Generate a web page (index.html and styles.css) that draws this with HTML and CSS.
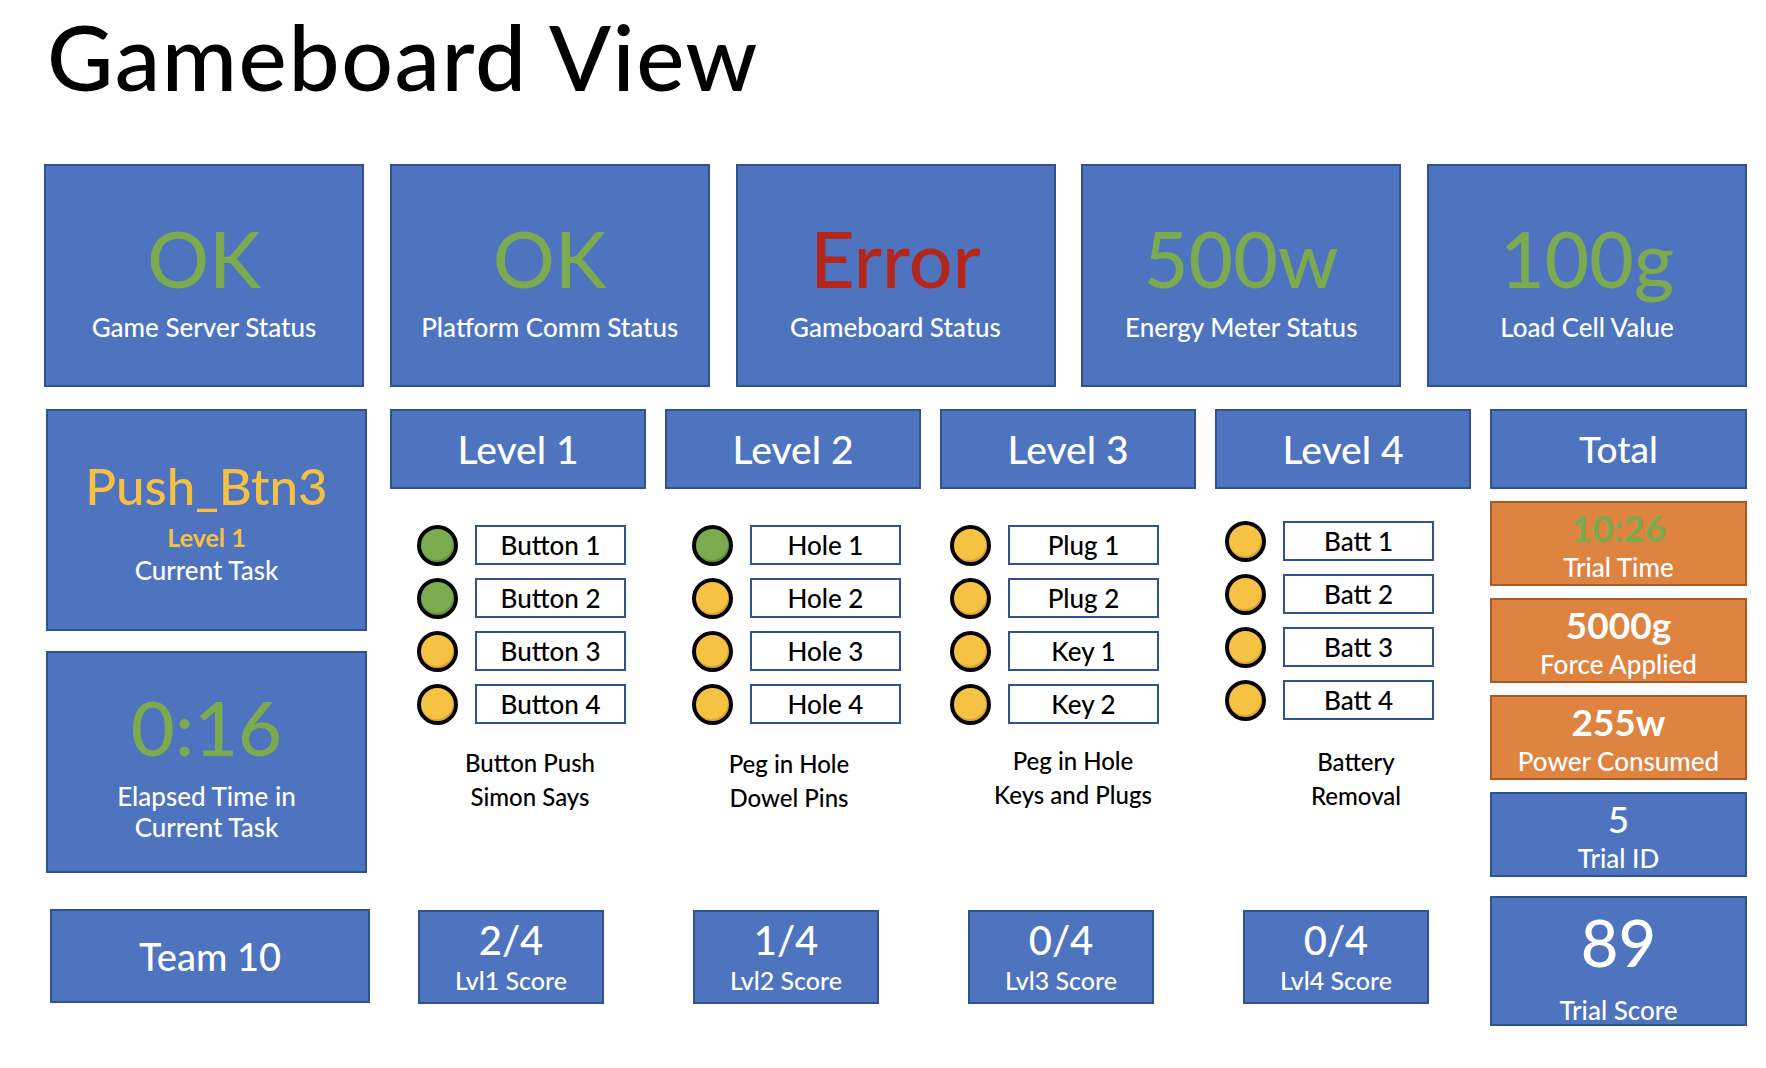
FILE: index.html
```html
<!DOCTYPE html>
<html lang="en">
<head>
<meta charset="utf-8">
<title>Gameboard View</title>
<link rel="stylesheet" href="styles.css">
</head>
<body>
<div class="page">
  <header class="title-bar"><h1 class="title">Gameboard View</h1></header>

  <section class="status-row">
    <div class="box status"><div class="status-val green">OK</div><div class="status-lab">Game Server Status</div></div>
    <div class="box status"><div class="status-val green">OK</div><div class="status-lab">Platform Comm Status</div></div>
    <div class="box status"><div class="status-val red">Error</div><div class="status-lab">Gameboard Status</div></div>
    <div class="box status"><div class="status-val green">500w</div><div class="status-lab">Energy Meter Status</div></div>
    <div class="box status"><div class="status-val green">100g</div><div class="status-lab">Load Cell Value</div></div>
  </section>

  <section class="main">
    <div class="left-col">
      <div class="box task">
        <div class="task-val">Push_Btn3</div>
        <div class="task-level">Level 1</div>
        <div class="task-lab">Current Task</div>
      </div>
      <div class="box elapsed">
        <div class="elapsed-val">0:16</div>
        <div class="elapsed-lab">Elapsed Time in</div>
        <div class="elapsed-lab">Current Task</div>
      </div>
      <div class="box team">Team 10</div>
    </div>

    <div class="level-col">
      <div class="box level-head">Level 1</div>
      <ul class="items">
        <li class="item"><span class="dot dot-green"></span><span class="item-lab">Button 1</span></li>
        <li class="item"><span class="dot dot-green"></span><span class="item-lab">Button 2</span></li>
        <li class="item"><span class="dot dot-yellow"></span><span class="item-lab">Button 3</span></li>
        <li class="item"><span class="dot dot-yellow"></span><span class="item-lab">Button 4</span></li>
      </ul>
      <div class="caption cap-1">Button Push<br>Simon Says</div>
      <div class="box score"><div class="score-val">2/4</div><div class="score-lab">Lvl1 Score</div></div>
    </div>

    <div class="level-col">
      <div class="box level-head">Level 2</div>
      <ul class="items">
        <li class="item"><span class="dot dot-green"></span><span class="item-lab">Hole 1</span></li>
        <li class="item"><span class="dot dot-yellow"></span><span class="item-lab">Hole 2</span></li>
        <li class="item"><span class="dot dot-yellow"></span><span class="item-lab">Hole 3</span></li>
        <li class="item"><span class="dot dot-yellow"></span><span class="item-lab">Hole 4</span></li>
      </ul>
      <div class="caption cap-2">Peg in Hole<br>Dowel Pins</div>
      <div class="box score"><div class="score-val">1/4</div><div class="score-lab">Lvl2 Score</div></div>
    </div>

    <div class="level-col">
      <div class="box level-head">Level 3</div>
      <ul class="items items-narrow">
        <li class="item"><span class="dot dot-yellow"></span><span class="item-lab">Plug 1</span></li>
        <li class="item"><span class="dot dot-yellow"></span><span class="item-lab">Plug 2</span></li>
        <li class="item"><span class="dot dot-yellow"></span><span class="item-lab">Key 1</span></li>
        <li class="item"><span class="dot dot-yellow"></span><span class="item-lab">Key 2</span></li>
      </ul>
      <div class="caption cap-3">Peg in Hole<br>Keys and Plugs</div>
      <div class="box score"><div class="score-val">0/4</div><div class="score-lab">Lvl3 Score</div></div>
    </div>

    <div class="level-col">
      <div class="box level-head">Level 4</div>
      <ul class="items items-narrow items-up">
        <li class="item"><span class="dot dot-yellow"></span><span class="item-lab">Batt 1</span></li>
        <li class="item"><span class="dot dot-yellow"></span><span class="item-lab">Batt 2</span></li>
        <li class="item"><span class="dot dot-yellow"></span><span class="item-lab">Batt 3</span></li>
        <li class="item"><span class="dot dot-yellow"></span><span class="item-lab">Batt 4</span></li>
      </ul>
      <div class="caption cap-4">Battery<br>Removal</div>
      <div class="box score"><div class="score-val">0/4</div><div class="score-lab">Lvl4 Score</div></div>
    </div>

    <div class="total-col">
      <div class="box level-head total-head">Total</div>
      <div class="tbox orange"><div class="tval bold green">10:26</div><div class="tlab">Trial Time</div></div>
      <div class="tbox orange"><div class="tval bold">5000g</div><div class="tlab">Force Applied</div></div>
      <div class="tbox orange"><div class="tval bold">255w</div><div class="tlab">Power Consumed</div></div>
      <div class="tbox blue"><div class="tval">5</div><div class="tlab">Trial ID</div></div>
      <div class="tbox blue trial-score"><div class="big-val">89</div><div class="big-lab">Trial Score</div></div>
    </div>
  </section>
</div>
</body>
</html>
```

FILE: styles.css
```css
* { box-sizing: border-box; }

html, body {
  margin: 0;
  padding: 0;
  background: #ffffff;
}

body {
  font-family: "Lato", "Open Sans", "Liberation Sans", sans-serif;
  font-weight: 500;
  color: #000;
}

.page {
  width: 1766px;
  height: 1068px;
  padding-left: 44px;
  overflow: hidden;
}

.title-bar {
  height: 164px;
  padding-top: 0;
}

.title {
  margin: 0 0 0 3px;
  font-size: 91px;
  line-height: 112px;
  font-weight: 500;
  letter-spacing: 1.6px;
}

.box {
  background: #4e73bf;
  border: 2px solid #30528e;
  color: #fff;
  text-align: center;
}

.green { color: #7aab4f; }
.red { color: #b3261a; }
.bold { font-weight: 700; }

/* status row */
.status-row {
  display: flex;
  gap: 25.75px;
}

.status {
  width: 320px;
  height: 223px;
  display: flex;
  flex-direction: column;
  justify-content: center;
  padding-bottom: 6px;
}

.status-val {
  font-size: 77px;
  line-height: 108px;
}

.status-lab {
  font-size: 26px;
  line-height: 30px;
}

/* main area */
.main {
  display: flex;
  gap: 19px;
  margin-top: 22px;
  margin-left: 2px;
}

.left-col {
  width: 321px;
  height: 594px;
  margin-right: 4px;
  display: flex;
  flex-direction: column;
}

.task, .elapsed {
  height: 222px;
  display: flex;
  flex-direction: column;
  justify-content: center;
}

.task {
  padding-bottom: 3px;
}

.task-val {
  font-size: 51px;
  line-height: 70px;
  color: #f6c143;
}

.task-level {
  font-size: 25px;
  line-height: 33px;
  font-weight: 700;
  color: #f6c143;
}

.task-lab {
  font-size: 26px;
  line-height: 33px;
}

.elapsed {
  margin-top: 20px;
  padding-bottom: 9px;
}

.elapsed-val {
  font-size: 76px;
  line-height: 108px;
  color: #7aab4f;
}

.elapsed-lab {
  font-size: 26px;
  line-height: 31px;
}

.team {
  margin-top: auto;
  margin-left: 4px;
  width: 320px;
  height: 94px;
  font-size: 38px;
  line-height: 90px;
}

/* level columns */
.level-col {
  width: 256px;
  height: 595px;
  display: flex;
  flex-direction: column;
}

.level-head {
  height: 80px;
  font-size: 39px;
  line-height: 76px;
}

.items {
  list-style: none;
  margin: 36px 0 0 0;
  padding: 0 0 0 27px;
  display: flex;
  flex-direction: column;
  gap: 13px;
}

.items-narrow { padding-left: 10px; }
.items-up { margin-top: 32px; }

.item {
  display: flex;
  align-items: center;
  height: 40px;
}

.dot {
  width: 41px;
  height: 41px;
  border-radius: 50%;
  border: 4px solid #050505;
  flex: none;
}

.dot-green {
  background: #7aab4f;
  box-shadow: inset -1px -2px 0 rgba(60, 90, 30, 0.35);
}

.dot-yellow {
  background: #f6c244;
  box-shadow: inset -1px -2px 0 rgba(170, 110, 20, 0.35);
}

.item-lab {
  margin-left: 17px;
  width: 151px;
  height: 40px;
  border: 2px solid #30528e;
  background: #fff;
  text-align: center;
  font-size: 26px;
  line-height: 36px;
}

.caption {
  margin-top: 22px;
  font-size: 24px;
  line-height: 34px;
  text-align: center;
}

.cap-1 { padding-left: 24px; }
.cap-2 { padding-right: 8px; margin-top: 23px; }
.cap-3 { padding-left: 10px; margin-top: 20px; }
.cap-4 { padding-left: 26px; margin-top: 25px; }

.score {
  margin-top: auto;
  margin-left: 28px;
  width: 186px;
  height: 94px;
  padding-top: 0;
}

.score-val {
  font-size: 40px;
  line-height: 56px;
}

.score-lab {
  font-size: 25px;
  line-height: 25px;
}

/* total column */
.total-col {
  width: 257px;
  display: flex;
  flex-direction: column;
}

.total-head {
  font-size: 37px;
}

.tbox {
  height: 85px;
  margin-top: 12px;
  border: 2px solid;
  color: #fff;
  text-align: center;
}

.orange {
  background: #df8341;
  border-color: #a95b27;
}

.blue {
  background: #4e73bf;
  border-color: #30528e;
}

.tval {
  font-size: 37px;
  line-height: 49px;
}

.tval.green { color: #7aab4f; }

.tlab {
  font-size: 26px;
  line-height: 31px;
}

.trial-score {
  height: 130px;
  margin-top: 19px;
}

.big-val {
  font-size: 65px;
  line-height: 88px;
}

.big-lab {
  margin-top: 9px;
  font-size: 26px;
  line-height: 30px;
}
```
